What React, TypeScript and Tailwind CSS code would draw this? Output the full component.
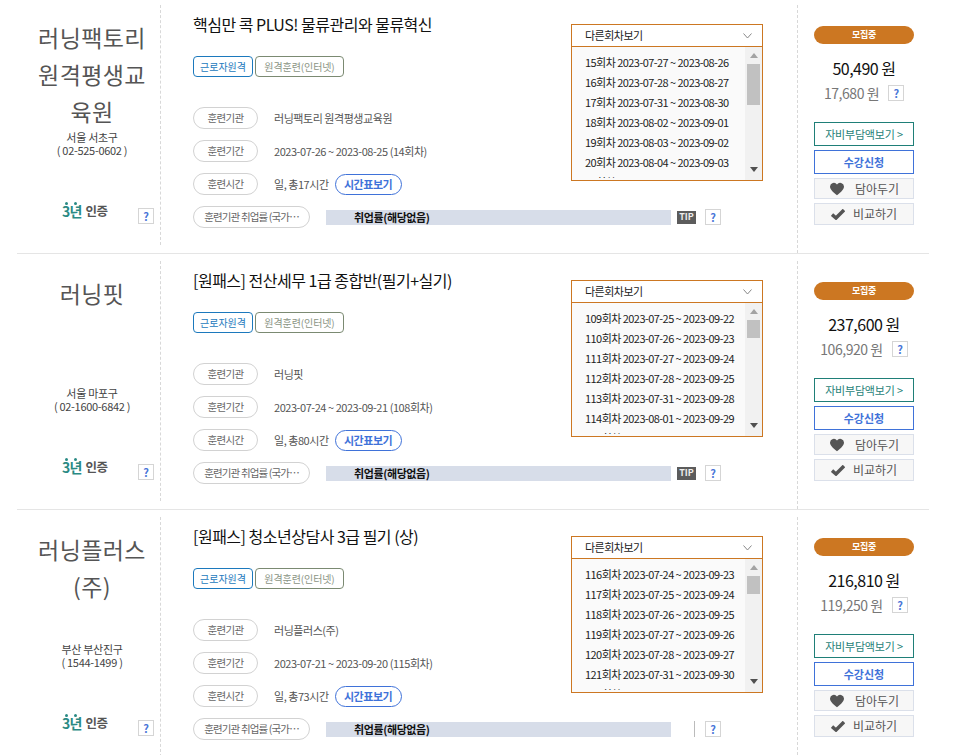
const font = { fontFamily: '"Noto Sans CJK KR", "Noto Sans", sans-serif' };

type Course = {
  org: string[];
  region: string;
  phone: string;
  title: string;
  orgName: string;
  period: string;
  hours: string;
  sessions: string[];
  thumbTop: string;
  price: string;
  selfPay: string;
  tip: boolean;
};

const courses: Course[] = [
  {
    org: ["러닝팩토리", "원격평생교", "육원"],
    region: "서울 서초구",
    phone: "( 02-525-0602 )",
    title: "핵심만 콕 PLUS! 물류관리와 물류혁신",
    orgName: "러닝팩토리 원격평생교육원",
    period: "2023-07-26 ~ 2023-08-25 (14회차)",
    hours: "일, 총17시간",
    sessions: [
      "15회차 2023-07-27 ~ 2023-08-26",
      "16회차 2023-07-28 ~ 2023-08-27",
      "17회차 2023-07-31 ~ 2023-08-30",
      "18회차 2023-08-02 ~ 2023-09-01",
      "19회차 2023-08-03 ~ 2023-09-02",
      "20회차 2023-08-04 ~ 2023-09-03",
      "21회차 2023-08-07 ~ 2023-09-06",
    ],
    thumbTop: "h-[41px]",
    price: "50,490",
    selfPay: "17,680",
    tip: true,
  },
  {
    org: ["러닝핏"],
    region: "서울 마포구",
    phone: "( 02-1600-6842 )",
    title: "[원패스] 전산세무 1급 종합반(필기+실기)",
    orgName: "러닝핏",
    period: "2023-07-24 ~ 2023-09-21 (108회차)",
    hours: "일, 총80시간",
    sessions: [
      "109회차 2023-07-25 ~ 2023-09-22",
      "110회차 2023-07-26 ~ 2023-09-23",
      "111회차 2023-07-27 ~ 2023-09-24",
      "112회차 2023-07-28 ~ 2023-09-25",
      "113회차 2023-07-31 ~ 2023-09-28",
      "114회차 2023-08-01 ~ 2023-09-29",
      "115회차 2023-08-02 ~ 2023-09-30",
    ],
    thumbTop: "h-[18px]",
    price: "237,600",
    selfPay: "106,920",
    tip: true,
  },
  {
    org: ["러닝플러스", "(주)"],
    region: "부산 부산진구",
    phone: "( 1544-1499 )",
    title: "[원패스] 청소년상담사 3급 필기 (상)",
    orgName: "러닝플러스(주)",
    period: "2023-07-21 ~ 2023-09-20 (115회차)",
    hours: "일, 총73시간",
    sessions: [
      "116회차 2023-07-24 ~ 2023-09-23",
      "117회차 2023-07-25 ~ 2023-09-24",
      "118회차 2023-07-26 ~ 2023-09-25",
      "119회차 2023-07-27 ~ 2023-09-26",
      "120회차 2023-07-28 ~ 2023-09-27",
      "121회차 2023-07-31 ~ 2023-09-30",
      "122회차 2023-08-01 ~ 2023-10-01",
    ],
    thumbTop: "h-[18px]",
    price: "216,810",
    selfPay: "119,250",
    tip: false,
  },
];

function HelpBox() {
  return (
    <span className="flex h-[16px] w-[16px] shrink-0 items-center justify-center border border-[#d5d5d5] bg-white text-[11px] font-bold text-[#4a76d8]">
      ?
    </span>
  );
}

function Label({ text }: { text: string }) {
  return (
    <span className="flex h-[22px] w-[65px] shrink-0 items-center justify-center rounded-full border border-[#d2d2d2] text-[10.5px] tracking-[-0.7px] text-[#666]">
      {text}
    </span>
  );
}

function InfoRow({ label, children }: { label: string; children: React.ReactNode }) {
  return (
    <div className="flex h-[22px] items-center gap-[16px]">
      <Label text={label} />
      {children}
    </div>
  );
}

function SessionBox({ course }: { course: Course }) {
  return (
    <div className="mt-[11px] h-[157px] w-[192px] shrink-0 border border-[#cc7722] bg-white">
      <div className="flex h-[22px] items-center justify-between border-b border-[#cc7722] pl-[13px] pr-[10px] text-[11px] tracking-[-0.5px] text-[#222]">
        <span>다른회차보기</span>
        <svg width="9" height="6" viewBox="0 0 9 6" fill="none" stroke="#888" strokeWidth="1">
          <path d="M.5.5l4 4.500 4-4.500" />
        </svg>
      </div>
      <div className="flex h-[133px]">
        <div className="flex-1 bg-[#fafafa]">
          <div className="h-[131px] overflow-hidden pl-[13px] pt-[5px] text-[11px] leading-[20px] tracking-[-0.55px] text-[#222]">
            {course.sessions.map((s) => (
              <div key={s} className="whitespace-nowrap">
                {s}
              </div>
            ))}
          </div>
        </div>
        <div className="flex w-[17px] flex-col items-center bg-[#f1f1f1] px-[2px]">
          <svg className="my-[6px]" width="8" height="5" viewBox="0 0 8 5" fill="#a3a3a3">
            <path d="M4 0l4 5H0z" />
          </svg>
          <div className={`w-[13px] shrink-0 bg-[#c1c1c1] ${course.thumbTop}`} />
          <div className="flex-1" />
          <svg className="mb-[8px]" width="8" height="5" viewBox="0 0 8 5" fill="#505050">
            <path d="M0 0h8L4 5z" />
          </svg>
        </div>
      </div>
    </div>
  );
}

function CourseRow({ course }: { course: Course }) {
  return (
    <div className="flex h-[256px] border-b border-[#e5e5e5] pt-[7px]">
      <div className="flex h-[240px] w-[144px] shrink-0 flex-col border-r border-dashed border-[#d8d8d8] pl-[7px]">
        <div className="flex h-[198px] flex-col items-center pt-[14px]">
          <div className="h-[112px] text-center text-[23px] leading-[37px] tracking-[0.4px] text-[#555]">
            {course.org.map((line) => (
              <div key={line}>{line}</div>
            ))}
          </div>
          <div className="text-center text-[11px] leading-[13px] tracking-[-0.3px] text-[#444]">
            <div>{course.region}</div>
            <div>{course.phone}</div>
          </div>
        </div>
        <div className="flex h-[26px] items-center pl-[38px]">
          <div className="mb-[10px] flex w-[44px] shrink-0 items-center whitespace-nowrap">
            <span className="relative text-[14px] font-bold tracking-[-0.8px] text-[#2a8a84]">
              3년
              <span className="absolute left-[3px] top-[1px] h-[3px] w-[3px] rounded-full bg-[#2a8a84]" />
              <span className="absolute left-[12px] top-[1px] h-[3px] w-[3px] rounded-full bg-[#2a8a84]" />
            </span>
            <span className="ml-[4px] text-[12.5px] font-bold tracking-[-0.5px] text-[#555]">인증</span>
          </div>
          <span className="ml-[32px]">
            <HelpBox />
          </span>
        </div>
      </div>

      <div className="w-[637px] shrink-0 border-r border-dashed border-[#d8d8d8] pl-[32px]">
        <div className="flex h-[201px] justify-between pr-[34px] pt-[8px]">
          <div className="flex flex-col">
            <div className="h-[22px] text-[16px] leading-[22px] tracking-[-0.5px] text-[#111]">
              {course.title}
            </div>
            <div className="mt-[21px] flex gap-[2px]">
              <span className="flex h-[21px] w-[60px] items-center justify-center rounded-[4px] border border-[#1c79bd] text-[10px] text-[#1c79bd]">
                근로자원격
              </span>
              <span className="flex h-[21px] w-[89px] items-center justify-center rounded-[4px] border border-[#7b8a72] text-[10px] tracking-[-0.1px] text-[#8a9484]">
                원격훈련(인터넷)
              </span>
            </div>
            <div className="mt-[30px] flex flex-col gap-[11px] text-[11px] tracking-[-0.45px] text-[#555]">
              <InfoRow label="훈련기관">
                <span>{course.orgName}</span>
              </InfoRow>
              <InfoRow label="훈련기간">
                <span>{course.period}</span>
              </InfoRow>
              <InfoRow label="훈련시간">
                <span>{course.hours}</span>
                <span className="-ml-[10px] flex h-[21px] w-[67px] items-center justify-center rounded-full border border-[#3f72d9] text-[11px] font-bold text-[#3f72d9]">
                  시간표보기
                </span>
              </InfoRow>
            </div>
          </div>
          <SessionBox course={course} />
        </div>
        <div className="flex h-[22px] items-center">
          <span className="flex h-[22px] w-[117px] shrink-0 items-center justify-center rounded-full border border-[#d2d2d2] text-[10.5px] tracking-[-0.85px] text-[#666]">
            훈련기관 취업률 (국가…
          </span>
          <div className="ml-[16px] flex h-[15px] w-[345px] items-center bg-[#d7dde9] pl-[28px] text-[11px] font-bold tracking-[-0.4px] text-[#111]">
            취업률(해당없음)
          </div>
          {course.tip ? (
            <span className="ml-[6px] flex h-[13px] w-[19px] items-center justify-center bg-[#5c5c5c] text-[9px] font-bold text-[#eee]">
              TIP
            </span>
          ) : (
            <span className="ml-[6px] flex w-[19px] justify-end pr-px">
              <span className="h-[16px] w-px bg-[#bbb]" />
            </span>
          )}
          <span className="ml-[9px]">
            <HelpBox />
          </span>
        </div>
      </div>

      <div className="flex flex-col items-center pl-[16px] pt-[21px]">
        <div className="flex h-[18px] w-[100px] items-center justify-center rounded-full bg-[#cc7722] text-[9px] font-bold tracking-[-0.3px] text-white">
          모집중
        </div>
        <div className="mt-[12px] text-[16px] leading-[24px] tracking-[-0.5px] text-[#111]">
          {course.price} 원
        </div>
        <div className="mt-[3px] flex h-[20px] items-center gap-[9px] text-[14px] tracking-[-0.45px] text-[#777]">
          <span>{course.selfPay} 원</span>
          <HelpBox />
        </div>
        <div className="mt-[19px] flex w-[100px] flex-col gap-[4px]">
          <div className="flex h-[24px] items-center justify-center border border-[#1f7f78] text-[11px] tracking-[-0.2px] text-[#1f7f78]">
            자비부담액보기 &gt;
          </div>
          <div className="flex h-[24px] items-center justify-center border border-[#3f72d9] text-[11px] font-bold text-[#3f72d9]">
            수강신청
          </div>
          <div className="flex h-[21px] items-center justify-center gap-[10px] border border-[#dbe0ea] bg-[#f7f7f7] text-[12px] text-[#555]">
            <svg width="16" height="14" viewBox="0 0 24 22" fill="#555">
              <path d="M12 21C5 15 1 11.500 1 7a6 6 0 0 1 11-3 6 6 0 0 1 11 3c0 4.500-4 8-11 14z" />
            </svg>
            담아두기
          </div>
          <div className="flex h-[22px] items-center justify-center gap-[8px] border border-[#dbe0ea] bg-[#f7f7f7] text-[12px] text-[#555]">
            <svg width="14" height="11" viewBox="0 0 14 11" fill="none" stroke="#555" strokeWidth="3.500">
              <path d="M1 5.500l4 3.500 8-8" />
            </svg>
            비교하기
          </div>
        </div>
      </div>
    </div>
  );
}

export default function App() {
  return (
    <div className="h-[755px] w-[953px] overflow-hidden bg-white" style={font}>
      <div className="-mt-[2px] ml-[17px] w-[912px]">
        {courses.map((c) => (
          <CourseRow key={c.title} course={c} />
        ))}
      </div>
    </div>
  );
}
